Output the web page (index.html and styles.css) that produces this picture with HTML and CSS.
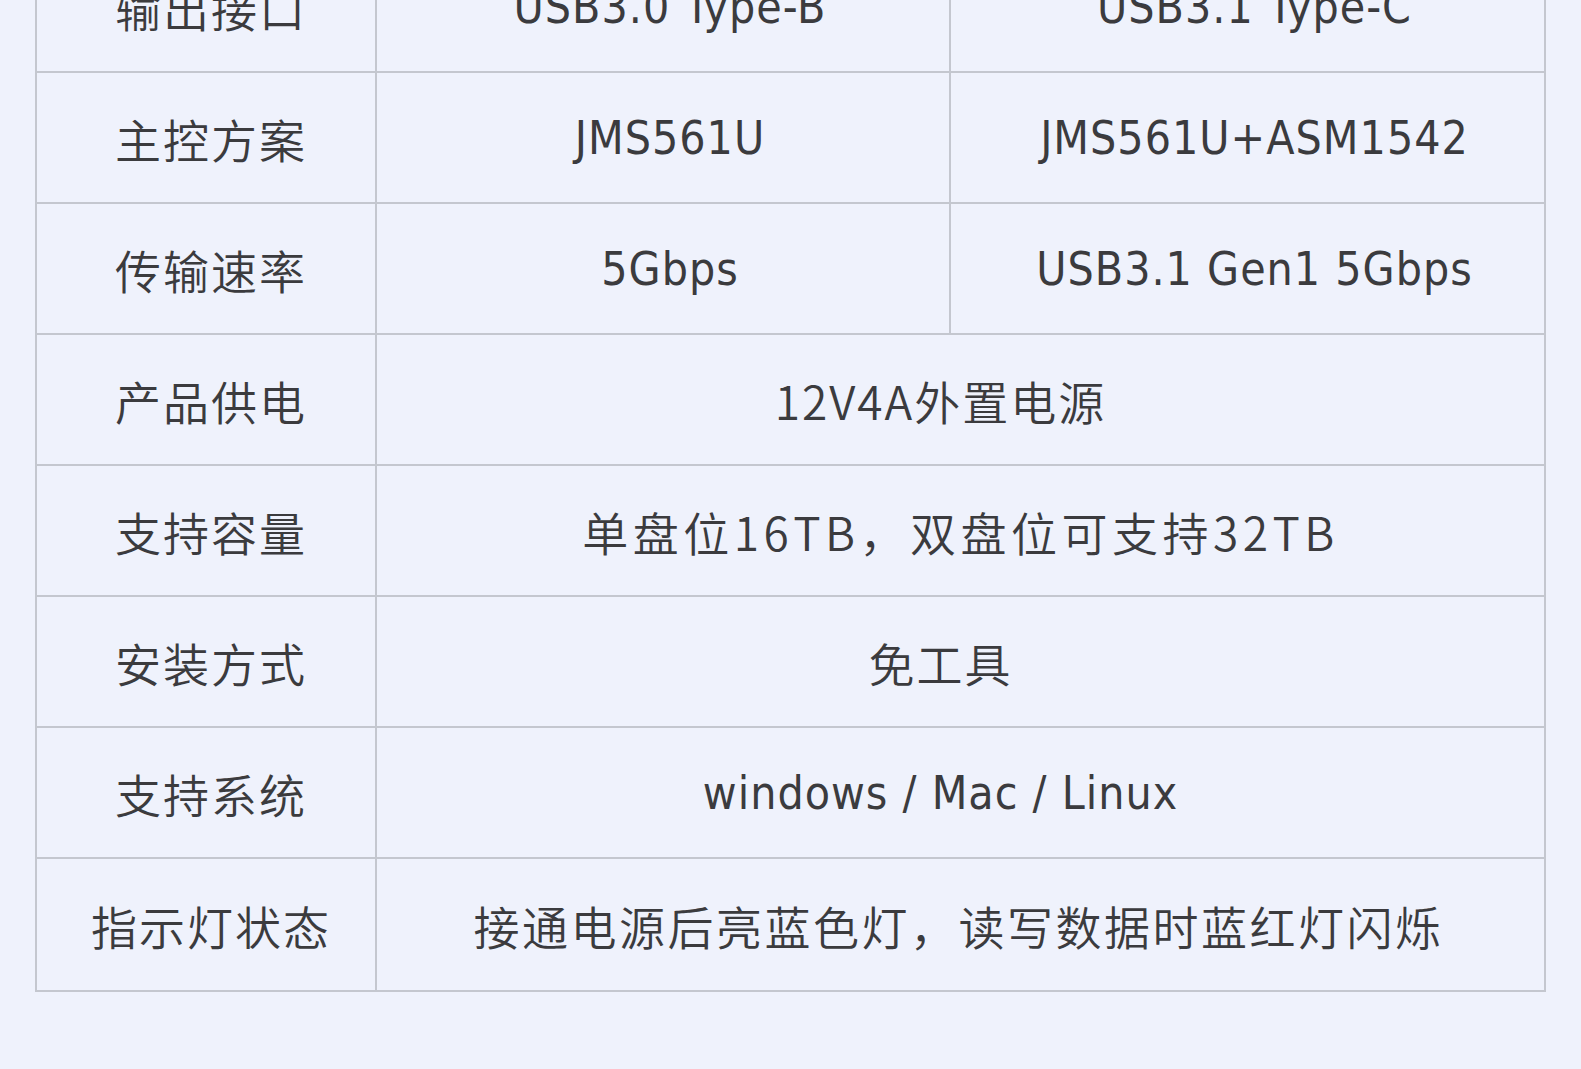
FILE: index.html
```html
<!DOCTYPE html>
<html lang="zh-CN">

<head>
	<title>产品参数</title>
	<meta charset="utf-8"/>
	<meta name="viewport" content="width=device-width, initial-scale=1"/>

	<link rel="stylesheet" href="styles.css">
</head>

<body>
	<div class="spec">
		<div class="cell label">输出接口</div>
		<div class="cell latin">USB3.0 Type-B</div>
		<div class="cell latin">USB3.1 Type-C</div>

		<div class="cell label">主控方案</div>
		<div class="cell latin">JMS561U</div>
		<div class="cell latin">JMS561U+ASM1542</div>

		<div class="cell label">传输速率</div>
		<div class="cell latin">5Gbps</div>
		<div class="cell latin">USB3.1 Gen1 5Gbps</div>

		<div class="cell label">产品供电</div>
		<div class="cell wide">12V4A外置电源</div>

		<div class="cell label">支持容量</div>
		<div class="cell wide cap">单盘位16TB，双盘位可支持32TB</div>

		<div class="cell label">安装方式</div>
		<div class="cell wide">免工具</div>

		<div class="cell label">支持系统</div>
		<div class="cell wide latin">windows / Mac / Linux</div>

		<div class="cell label">指示灯状态</div>
		<div class="cell wide led">接通电源后亮蓝色灯，读写数据时蓝红灯闪烁</div>
	</div>
</body>
</html>
```

FILE: styles.css
```css
body {
	margin: 0;
	background-color: #eff2fc;
	font-family: "Noto Sans CJK SC", "Noto Sans", sans-serif;
	color: #3b3b3e;
	overflow: hidden;
}

.spec {
	display: grid;
	grid-template-columns: 340px 574px 595px;
	grid-auto-rows: 131px;
	width: 1509px;
	margin: -58px 0 0 35px;
	border-left: 2px solid #c4c7cf;
	border-bottom: 2px solid #c4c7cf;
}

.cell {
	display: flex;
	align-items: center;
	justify-content: center;
	border-right: 2px solid #c4c7cf;
	border-bottom: 2px solid #c4c7cf;
	font-size: 46px;
	font-weight: 350;
	letter-spacing: 2px;
	white-space: nowrap;
}

.label {
	padding-left: 10px;
}

.latin {
	font-family: "DejaVu Sans Condensed", "Noto Sans CJK SC", sans-serif;
	font-weight: 300;
	letter-spacing: 1px;
	padding-left: 14px;
}

.cell.wide {
	grid-column: span 2;
	padding-left: 0;
	padding-right: 40px;
}

.cell.cap {
	letter-spacing: 4.5px;
	padding-right: 0;
}

.cell.led {
	letter-spacing: 2.5px;
	padding-right: 4px;
}

.spec > .cell:nth-last-child(-n+2) {
	border-bottom: none;
}
```
